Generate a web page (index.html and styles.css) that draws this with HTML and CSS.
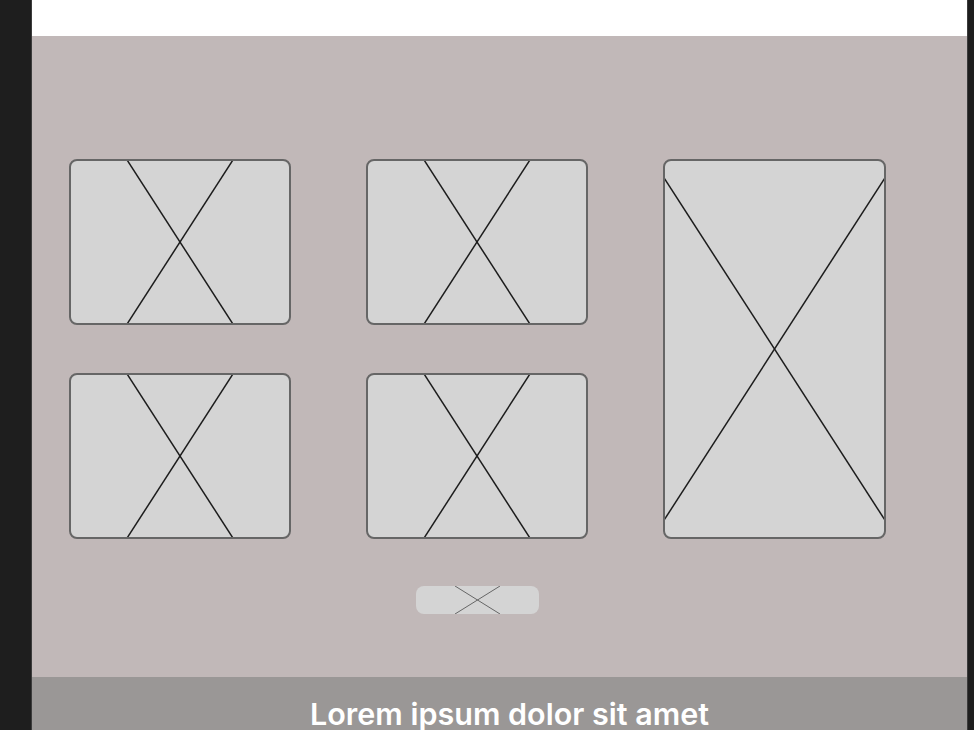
FILE: index.html
```html
<!DOCTYPE html>
<html lang="en">
<head>
    <meta charset="UTF-8">
    <meta name="viewport" content="width=device-width, initial-scale=1.0">
    <title>Gallery</title>
    <link rel="stylesheet" href="styles.css">
</head>
<body>
    <div class="page">
        <div class="sidebar"></div>

        <div class="frame">
            <header class="topbar"></header>

            <main class="gallery">
                <div class="grid">
                    <div class="tile">
                        <svg class="ph" viewBox="0 0 222 344" preserveAspectRatio="xMidYMid slice">
                            <line x1="0" y1="0" x2="222" y2="344"/>
                            <line x1="222" y1="0" x2="0" y2="344"/>
                        </svg>
                    </div>
                    <div class="tile">
                        <svg class="ph" viewBox="0 0 222 344" preserveAspectRatio="xMidYMid slice">
                            <line x1="0" y1="0" x2="222" y2="344"/>
                            <line x1="222" y1="0" x2="0" y2="344"/>
                        </svg>
                    </div>
                    <div class="tile tall">
                        <svg class="ph" viewBox="0 0 222 344" preserveAspectRatio="xMidYMid slice">
                            <line x1="0" y1="0" x2="222" y2="344"/>
                            <line x1="222" y1="0" x2="0" y2="344"/>
                        </svg>
                    </div>
                    <div class="tile">
                        <svg class="ph" viewBox="0 0 222 344" preserveAspectRatio="xMidYMid slice">
                            <line x1="0" y1="0" x2="222" y2="344"/>
                            <line x1="222" y1="0" x2="0" y2="344"/>
                        </svg>
                    </div>
                    <div class="tile">
                        <svg class="ph" viewBox="0 0 222 344" preserveAspectRatio="xMidYMid slice">
                            <line x1="0" y1="0" x2="222" y2="344"/>
                            <line x1="222" y1="0" x2="0" y2="344"/>
                        </svg>
                    </div>

                    <!-- boton de "ver mas" debajo de la segunda columna -->
                    <div class="more">
                        <svg class="ph small" viewBox="0 0 45 28" preserveAspectRatio="xMidYMid meet">
                            <line x1="0" y1="0" x2="45" y2="28"/>
                            <line x1="45" y1="0" x2="0" y2="28"/>
                        </svg>
                    </div>
                </div>
            </main>

            <footer class="footer">
                <h2>Lorem ipsum dolor sit amet</h2>
            </footer>
        </div>

        <div class="edge"></div>
    </div>
</body>
</html>
```

FILE: styles.css
```css
body {
    margin: 0;
    background-color: #1e1e1e;
    font-family: Inter, "Noto Sans", sans-serif;
    overflow: hidden;
}

.page {
    display: flex;
    height: 730px;
}

.sidebar {
    width: 31px;
    border-right: 1px solid #3c3c3c;
    background-color: #1e1e1e;
}

.edge {
    width: 6px;
    border-left: 1px solid #3c3c3c;
    background-color: #1e1e1e;
}

.frame {
    flex: 1;
    display: flex;
    flex-direction: column;
    overflow: hidden;
}

.topbar {
    flex-shrink: 0;
    height: 36px;
    background-color: #fff;
}

.gallery {
    flex-shrink: 0;
    height: 641px;
    box-sizing: border-box;
    padding: 123px 0 0 37px;
    background-color: #c1b8b8;
}

.grid {
    display: grid;
    grid-template-columns: 222px 222px 223px;
    grid-template-rows: 166px 166px 28px;
    column-gap: 75px;
    row-gap: 48px;
}

.tile {
    box-sizing: border-box;
    background-color: #d4d4d4;
    border: 2px solid #666;
    border-radius: 8px;
    overflow: hidden;
}

.tall {
    grid-column: 3;
    grid-row: 1 / span 2;
}

.ph {
    display: block;
    width: 100%;
    height: 100%;
}

.ph line {
    stroke: #1c1c1c;
    stroke-width: 1.5;
    vector-effect: non-scaling-stroke;
}

.more {
    grid-column: 2;
    grid-row: 3;
    justify-self: center;
    margin-top: -1px;
    width: 123px;
    height: 28px;
    background-color: #d4d4d4;
    border-radius: 8px;
}

.ph.small line {
    stroke: #666;
    stroke-width: 1;
}

.footer {
    flex-shrink: 0;
    height: 60px;
    box-sizing: border-box;
    padding: 19px 0 0 20px;
    background-color: #9a9796;
}

.footer h2 {
    margin: 0;
    text-align: center;
    color: #fff;
    font-size: 30.5px;
    font-weight: 600;
    line-height: 36px;
}
```
